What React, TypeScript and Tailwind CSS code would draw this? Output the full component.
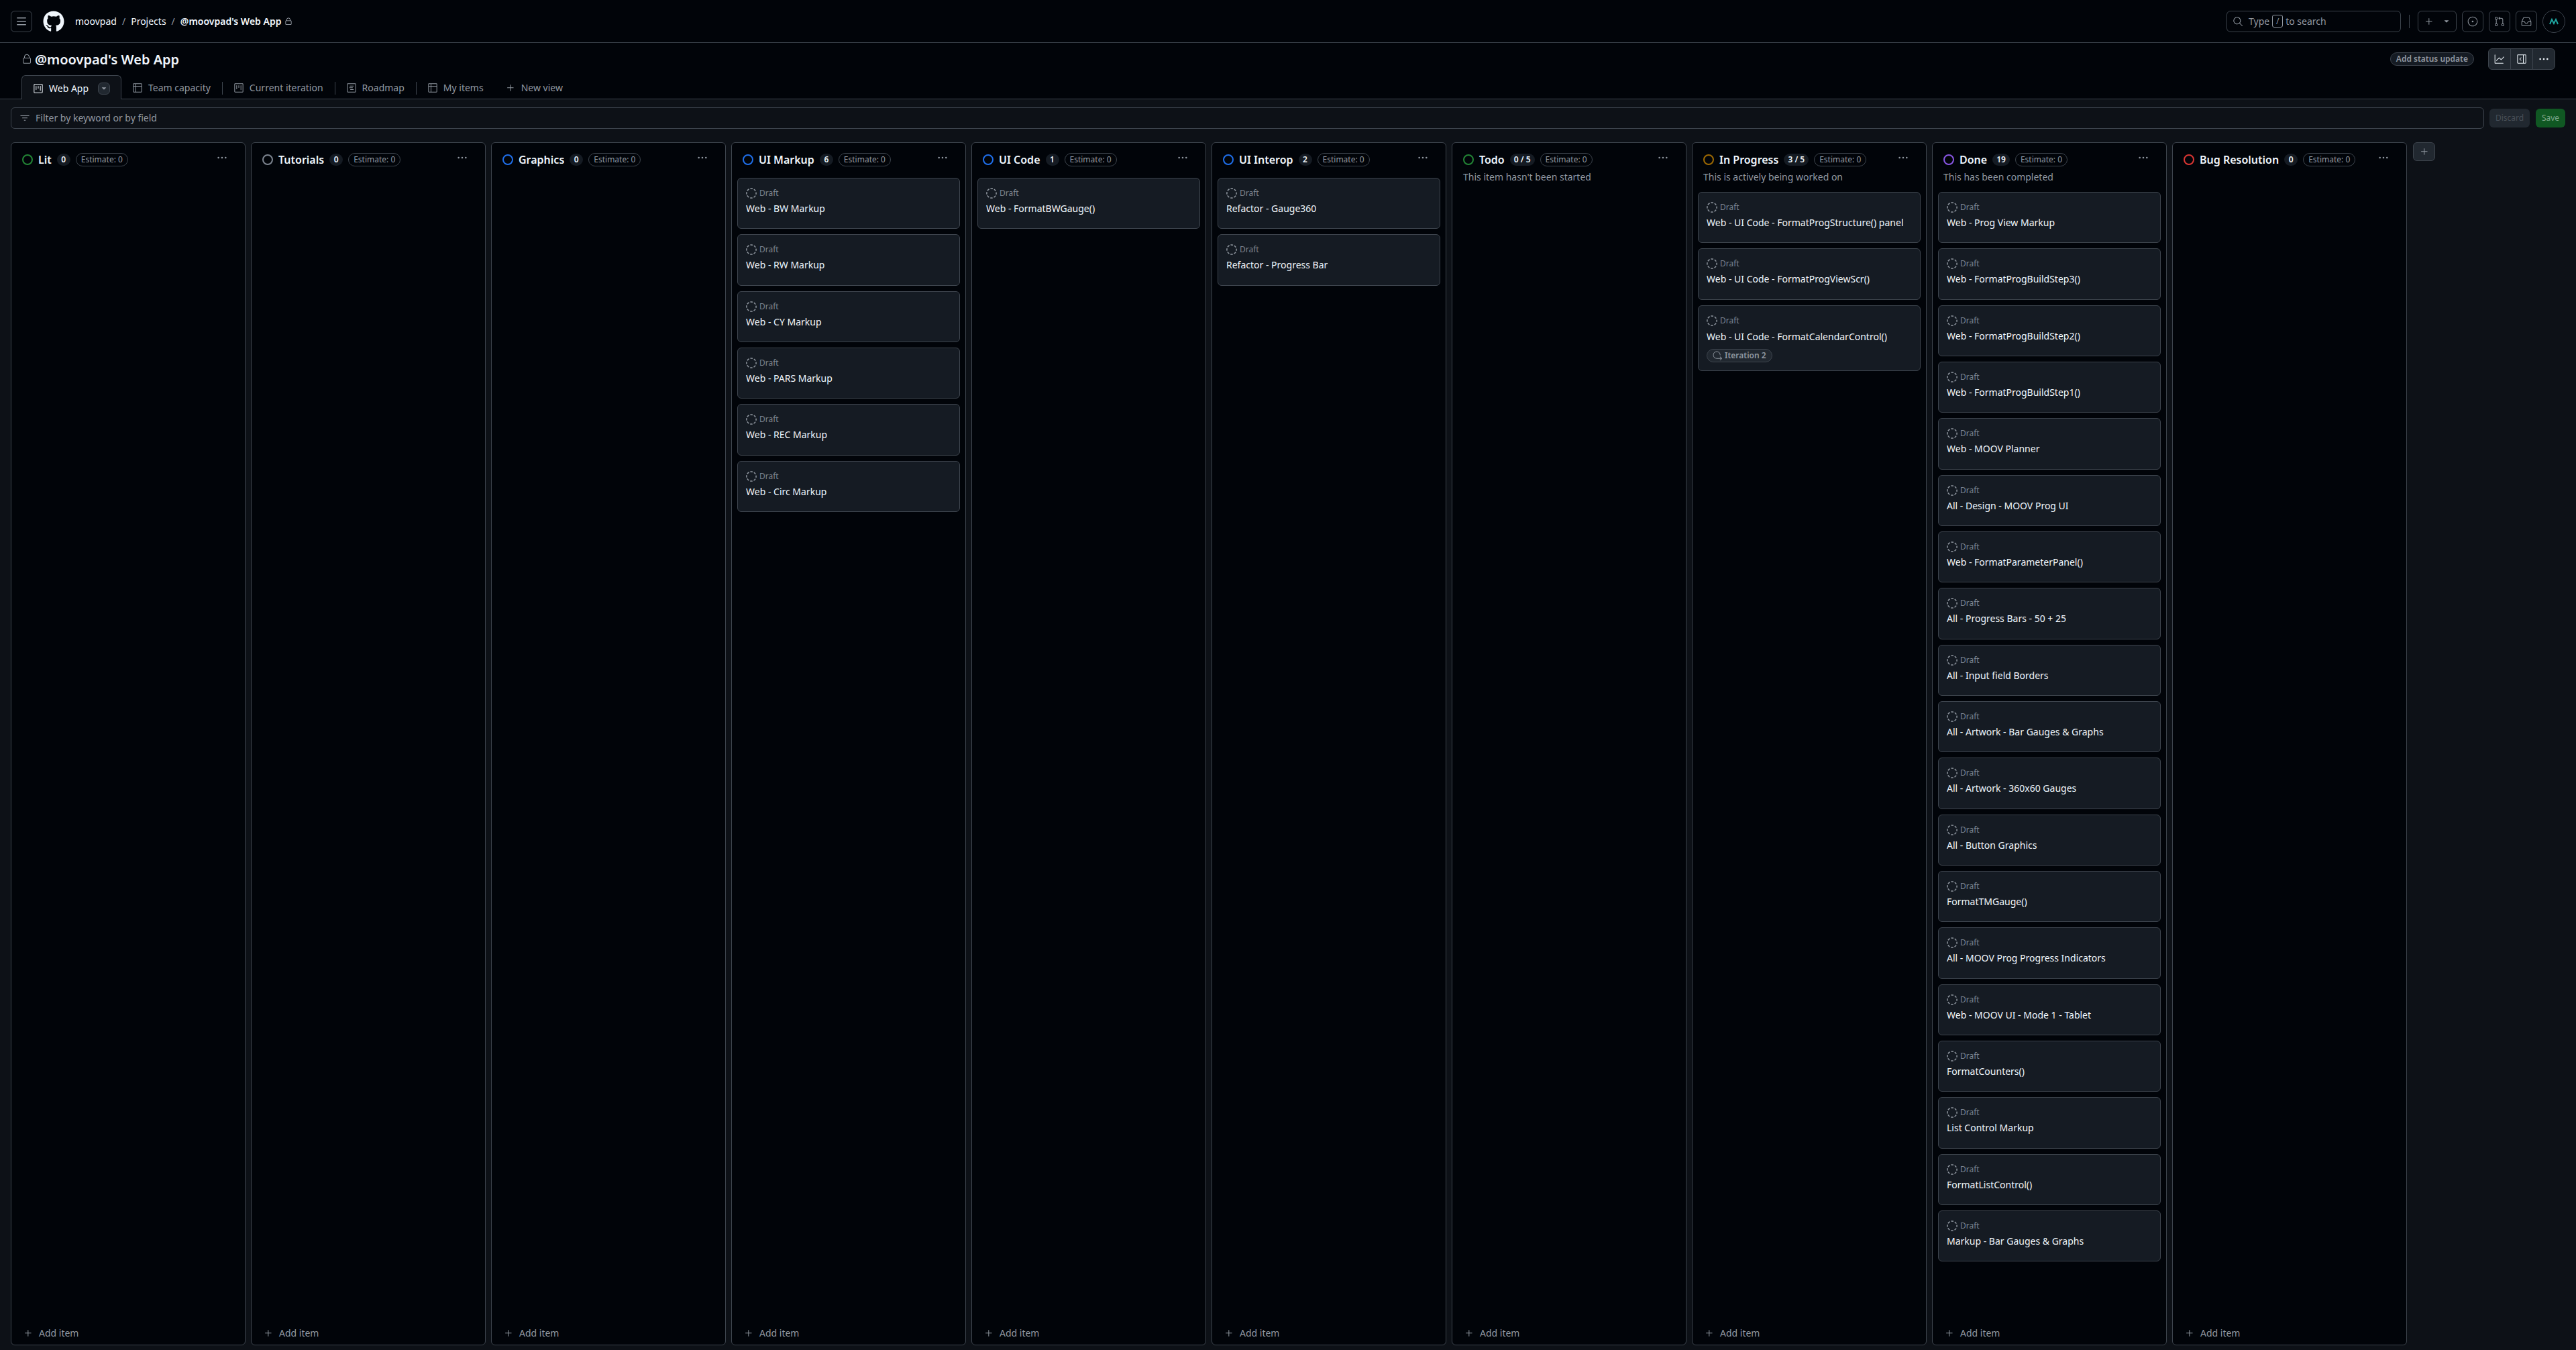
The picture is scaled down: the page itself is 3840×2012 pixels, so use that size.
import {
	GoLock,
	GoProject,
	GoTable,
	GoProjectRoadmap,
	GoPlus,
	GoFilter,
	GoSearch,
	GoIssueOpened,
	GoGitPullRequest,
	GoInbox,
	GoGraph,
	GoSidebarExpand,
	GoKebabHorizontal,
	GoIterations,
	GoTriangleDown,
} from "react-icons/go";
import { FaGithub } from "react-icons/fa";

type Item = { title: string; iteration?: string };

type Column = {
	name: string;
	count: string;
	ring: string;
	desc?: string;
	items: string[];
};

const columns: Column[] = [
	{ name: "Lit", count: "0", ring: "border-[#238636]", items: [] },
	{ name: "Tutorials", count: "0", ring: "border-[#7d8590]", items: [] },
	{ name: "Graphics", count: "0", ring: "border-[#1f6feb]", items: [] },
	{
		name: "UI Markup",
		count: "6",
		ring: "border-[#1f6feb]",
		items: ["Web - BW Markup", "Web - RW Markup", "Web - CY Markup", "Web - PARS Markup", "Web - REC Markup", "Web - Circ Markup"],
	},
	{ name: "UI Code", count: "1", ring: "border-[#1f6feb]", items: ["Web - FormatBWGauge()"] },
	{ name: "UI Interop", count: "2", ring: "border-[#1f6feb]", items: ["Refactor - Gauge360", "Refactor - Progress Bar"] },
	{ name: "Todo", count: "0 / 5", ring: "border-[#238636]", desc: "This item hasn't been started", items: [] },
	{
		name: "In Progress",
		count: "3 / 5",
		ring: "border-[#9e6a03]",
		desc: "This is actively being worked on",
		items: ["Web - UI Code - FormatProgStructure() panel", "Web - UI Code - FormatProgViewScr()", "Web - UI Code - FormatCalendarControl()"],
	},
	{
		name: "Done",
		count: "19",
		ring: "border-[#8957e5]",
		desc: "This has been completed",
		items: [
			"Web - Prog View Markup",
			"Web - FormatProgBuildStep3()",
			"Web - FormatProgBuildStep2()",
			"Web - FormatProgBuildStep1()",
			"Web - MOOV Planner",
			"All - Design - MOOV Prog UI",
			"Web - FormatParameterPanel()",
			"All - Progress Bars - 50 + 25",
			"All - Input field Borders",
			"All - Artwork - Bar Gauges & Graphs",
			"All - Artwork - 360x60 Gauges",
			"All - Button Graphics",
			"FormatTMGauge()",
			"All - MOOV Prog Progress Indicators",
			"Web - MOOV UI - Mode 1 - Tablet",
			"FormatCounters()",
			"List Control Markup",
			"FormatListControl()",
			"Markup - Bar Gauges & Graphs",
		],
	},
	{ name: "Bug Resolution", count: "0", ring: "border-[#da3633]", items: [] },
];

const ThreeBars = () => (
	<svg viewBox="0 0 16 16" className="size-4" fill="currentColor">
		<path d="M1 2.75A.75.75 0 0 1 1.75 2h12.5a.75.75 0 0 1 0 1.5H1.75A.75.75 0 0 1 1 2.75Zm0 5A.75.75 0 0 1 1.75 7h12.5a.75.75 0 0 1 0 1.5H1.75A.75.75 0 0 1 1 7.75ZM1.75 12h12.5a.75.75 0 0 1 0 1.5H1.75a.75.75 0 0 1 0-1.5Z" />
	</svg>
);

// dashed ring, eight dashes like the draft marker
const DraftIcon = () => (
	<svg viewBox="0 0 16 16" className="size-4 shrink-0" fill="none" stroke="#9198a1" strokeWidth="1.5">
		<circle cx="8" cy="8" r="7.1" strokeDasharray="3.58 2" strokeDashoffset="1.8" />
	</svg>
);

const Card = ({ title, iteration }: Item) => (
	<div className={`shrink-0 rounded-md border border-[#3d444d] bg-[#151b23] pl-3 pt-[14px] ${iteration ? "h-[98px]" : "h-[76.33px]"}`}>
		<div className="flex h-4 items-center gap-1 text-xs text-[#7d8590]">
			<DraftIcon />
			<span>Draft</span>
		</div>
		<div className={`h-5 text-sm leading-5 text-[#f0f6fc] ${iteration ? "mt-[6px]" : "mt-[5px]"}`}>{title}</div>
		{iteration && (
			<div className="mt-2 flex h-5 w-[98px] items-center gap-1 rounded-full border border-[#3d444d] bg-[#212830] pl-2 text-xs font-semibold text-[#9198a1]">
				<GoIterations className="size-3.5 shrink-0" />
				{iteration}
			</div>
		)}
	</div>
);

const BoardColumn = ({ column }: { column: Column }) => (
	<div className="flex h-full w-[350px] shrink-0 flex-col rounded-md border border-[#3d444d] bg-[#010409]">
		<div className={column.desc ? "h-[73px] shrink-0" : "h-[52px] shrink-0"}>
			<div className="flex h-[50px] items-center pl-4 pr-[26px]">
				<span className={`size-4 shrink-0 rounded-full border-2 ${column.ring}`} />
				<span className="ml-2 text-base font-semibold text-[#f0f6fc]">{column.name}</span>
				<span className="ml-2 flex h-[18px] min-w-5 items-center justify-center rounded-full bg-[#151b23] px-1.5 text-xs font-semibold text-[#f0f6fc]">
					{column.count}
				</span>
				<span className="ml-2 flex h-5 items-center rounded-full border border-[#3d444d] px-[7px] text-xs text-[#9198a1]">Estimate: 0</span>
				<GoKebabHorizontal className="mb-1.5 ml-auto size-4 text-[#9198a1]" />
			</div>
			{column.desc && <p className="-mt-[9px] pl-4 text-sm leading-5 text-[#9198a1]">{column.desc}</p>}
		</div>
		<div className="flex flex-1 flex-col gap-2 px-2">
			{column.items.map((title) => (
				<Card key={title} title={title} iteration={title.includes("FormatCalendarControl") ? "Iteration 2" : undefined} />
			))}
		</div>
		<div className="flex h-[34px] shrink-0 items-center gap-2 pl-[17px] text-sm text-[#9198a1]">
			<GoPlus className="size-4" />
			<span>Add item</span>
		</div>
	</div>
);

const IconBox = ({ children }: { children: React.ReactNode }) => (
	<div className="flex size-8 items-center justify-center rounded-md border border-[#3d444d] text-[#9198a1]">{children}</div>
);

const Tab = ({ icon, label }: { icon: React.ReactNode; label: string }) => (
	<div className="flex h-[35px] items-center gap-2 px-4 pt-[2px] text-sm text-[#9198a1]">
		{icon}
		{label}
	</div>
);

const Sep = () => <div className="mb-[6px] ml-px h-[19px] w-px bg-[#3d444d]" />;

export default function App() {
	return (
		<div className="flex h-[2012px] w-[3840px] flex-col overflow-hidden bg-[#0d1117] font-['Noto_Sans',sans-serif] text-[#f0f6fc]">
			{/* top bar */}
			<header className="flex h-[64px] shrink-0 items-center border-b border-[#3d444d] bg-[#010409] px-4">
				<IconBox>
					<ThreeBars />
				</IconBox>
				<FaGithub className="ml-4 size-8 text-[#f0f6fc]" />
				<nav className="ml-4 flex items-center gap-2 text-sm">
					<span>moovpad</span>
					<span className="text-[#9198a1]">/</span>
					<span>Projects</span>
					<span className="text-[#9198a1]">/</span>
					<span className="font-semibold">@moovpad's Web App</span>
				</nav>
				<GoLock className="ml-[5px] size-3 text-[#b7bdc8]" />
				<div className="ml-auto flex h-8 w-[260px] items-center rounded-md border border-[#3d444d] pl-2 text-sm text-[#9198a1]">
					<GoSearch className="size-4" />
					<span className="ml-2">Type</span>
					<span className="mx-1 flex h-[19px] w-4 items-center justify-center rounded-[3px] border border-[#9198a1] text-xs">/</span>
					<span>to search</span>
				</div>
				<div className="mx-3 h-5 w-px bg-[#3d444d]" />
				<div className="flex h-8 w-[58px] items-center justify-center gap-3 rounded-md border border-[#3d444d] text-[#9198a1]">
					<GoPlus className="size-4" />
					<GoTriangleDown className="size-3" />
				</div>
				<div className="ml-2 flex items-center gap-2">
					<IconBox>
						<GoIssueOpened className="size-4" />
					</IconBox>
					<IconBox>
						<GoGitPullRequest className="size-4" />
					</IconBox>
					<IconBox>
						<GoInbox className="size-4" />
					</IconBox>
					<div className="flex size-[34px] items-center justify-center rounded-full border border-[#3d444d] bg-[#010409]">
						<svg viewBox="0 0 14 10" className="h-[10px] w-[14px]" fill="none" stroke="#1fa6a0" strokeWidth="2">
							<path d="M1 9 L4 2 L7 8 L10 2 L13 9" />
						</svg>
					</div>
				</div>
			</header>

			{/* project title + views */}
			<section className="shrink-0 border-b border-[#3d444d] bg-[#010409]">
				<div className="flex h-[48px] items-center pl-[32px] pr-[31px]">
					<GoLock className="size-4 text-[#9198a1]" />
					<h1 className="ml-1 pt-[2px] text-xl font-semibold">@moovpad's Web App</h1>
					<div className="ml-auto flex h-5 items-center rounded-full border border-[#3d444d] bg-[#151b23] px-2 text-xs font-semibold text-[#9198a1]">
						Add status update
					</div>
					<div className="ml-[21px] flex h-8 w-[100px] items-center rounded-md border border-[#3d444d] bg-[#212830] text-[#f0f6fc]">
						<div className="flex h-full flex-1 items-center justify-center border-r border-[#3d444d]">
							<GoGraph className="size-4" />
						</div>
						<div className="flex h-full flex-1 items-center justify-center border-r border-[#3d444d]">
							<GoSidebarExpand className="size-4" />
						</div>
						<div className="flex h-full flex-1 items-center justify-center">
							<GoKebabHorizontal className="size-4" />
						</div>
					</div>
				</div>
				<div className="flex h-[35px] items-end pl-[32px]">
					<div className="-mb-px flex h-[36px] w-[149px] items-center rounded-t-md border border-b-0 border-[#3d444d] bg-[#0d1117] pl-4 pt-[2px] text-sm">
						<GoProject className="size-4" />
						<span className="ml-2">Web App</span>
						<span className="ml-[14px] flex size-[18px] items-center justify-center rounded-md border border-[#3d444d] bg-[#212830] text-[#9198a1]">
							<GoTriangleDown className="size-3" />
						</span>
					</div>
					<Tab icon={<GoTable className="size-4" />} label="Team capacity" />
					<Sep />
					<Tab icon={<GoProject className="size-4" />} label="Current iteration" />
					<Sep />
					<Tab icon={<GoProjectRoadmap className="size-4" />} label="Roadmap" />
					<Sep />
					<Tab icon={<GoTable className="size-4" />} label="My items" />
					<Tab icon={<GoPlus className="size-4" />} label="New view" />
				</div>
			</section>

			{/* filter */}
			<div className="flex h-[64px] shrink-0 items-center gap-2 px-4 pb-5 pt-3">
				<div className="flex h-8 flex-1 items-center gap-2 rounded-md border border-[#3d444d] pl-3 text-sm text-[#9198a1]">
					<GoFilter className="size-4" />
					Filter by keyword or by field
				</div>
				<div className="flex h-7 w-[60px] items-center justify-center rounded-md bg-[#212830] text-xs text-[#484f58]">Discard</div>
				<div className="ml-px flex h-7 w-11 items-center justify-center rounded-md bg-[#105823] text-xs text-[#7ea68a]">Save</div>
			</div>

			{/* board */}
			<main className="flex h-[1793px] shrink-0 items-start gap-2 px-4">
				{columns.map((column) => (
					<BoardColumn key={column.name} column={column} />
				))}
				<div className="ml-px flex h-7 w-[33px] items-center justify-center rounded-md border border-[#3d444d] bg-[#212830] text-[#9198a1]">
					<GoPlus className="size-4" />
				</div>
			</main>
		</div>
	);
}
